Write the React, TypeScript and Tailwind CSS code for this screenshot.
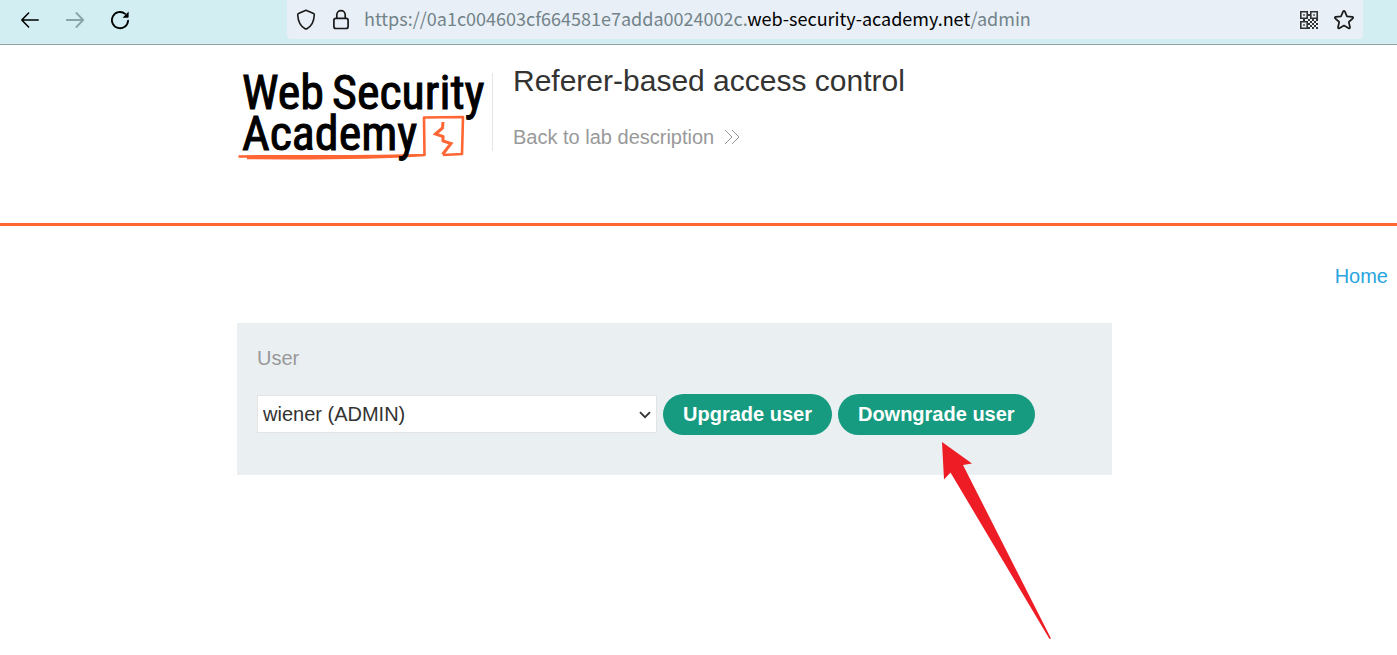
function BackIcon() {
  return (
    <svg width="20" height="20" viewBox="0 0 20 20" fill="none" stroke="currentColor" strokeWidth="1.6" strokeLinecap="round" strokeLinejoin="round" aria-hidden="true">
      <path d="M18.2 10H1.8M8.6 3 1.8 10l6.8 7" />
    </svg>
  );
}

function ForwardIcon() {
  return (
    <svg width="20" height="20" viewBox="0 0 20 20" fill="none" stroke="currentColor" strokeWidth="1.8" strokeLinecap="round" strokeLinejoin="round" aria-hidden="true">
      <path d="M1.8 10h16.4M11.4 3l6.8 7-6.8 7" />
    </svg>
  );
}

function ReloadIcon() {
  return (
    <svg width="20" height="20" viewBox="0 0 20 20" fill="none" stroke="currentColor" strokeWidth="1.8" strokeLinecap="round" aria-hidden="true">
      <path d="M18.1 10.6A8.1 8.1 0 1 1 15.2 3.9" />
      <path d="M18.6 1.6v5.3a.8.8 0 0 1-.8.8h-5.2z" fill="currentColor" stroke="none" />
    </svg>
  );
}

function ShieldIcon() {
  return (
    <svg width="20" height="22" viewBox="0 0 20 22" fill="none" stroke="currentColor" strokeWidth="1.6" strokeLinejoin="round" aria-hidden="true">
      <path d="M10 1.2 17.6 4.6c.5.2.7.6.7 1.1C18 12.1 15.6 17.2 10.9 19.7c-.6.3-1.2.3-1.8 0C4.4 17.2 2 12.1 1.7 5.7c0-.5.2-.9.7-1.1z" />
    </svg>
  );
}

function LockIcon() {
  return (
    <svg width="18" height="22" viewBox="0 0 18 22" fill="none" stroke="currentColor" strokeWidth="1.7" aria-hidden="true">
      <rect x="1.9" y="9.3" width="14.2" height="10.2" rx="2" />
      <path d="M4.8 9.3V5.8a4.2 4.2 0 0 1 8.4 0v3.5" />
    </svg>
  );
}

function QrIcon() {
  return (
    <svg width="18" height="18" viewBox="0 0 18 18" fill="#333" aria-hidden="true">
      <path fillRule="evenodd" d="M0 0h8v8H0zM1.600 1.600v4.800h4.800V1.600zM10 0h8v8h-8zM11.600 1.600v4.800h4.800V1.600zM0 10h8v8H0zM1.600 11.600v4.800h4.800v-4.800z" />
      <path d="M3.200 3.200h1.600v1.600H3.200zM13.200 3.200h1.600v1.600h-1.600zM3.200 13.200h1.600v1.600H3.200zM8 3h2v2H8zM3 8h2v2H3zM8 8h2v2H8zM12 8h2v2h-2zM16 8h2v2h-2zM10 10h2v2h-2zM14 10h2v2h-2zM8 12h2v2H8zM12 12h2v2h-2zM16 12h2v2h-2zM10 14h2v2h-2zM14 14h2v2h-2zM8 16h2v2H8zM12 16h2v2h-2zM16 16h2v2h-2z" />
    </svg>
  );
}

function StarIcon() {
  return (
    <svg width="20" height="20" viewBox="0 0 20 20" fill="none" stroke="currentColor" strokeWidth="1.7" strokeLinejoin="round" aria-hidden="true">
      <path d="M10 .9c.3 0 .6.2.8.5l2.2 4.9 5.3.6c.8.1 1.1 1 .5 1.500l-4 3.600 1.200 5.300c.1.800-.7 1.300-1.300 1L10 15.600l-4.700 2.700c-.6.300-1.400-.2-1.300-1l1.200-5.300-4-3.600c-.6-.5-.3-1.400.5-1.500l5.300-.6 2.200-4.900c.2-.3.500-.5.800-.5z" />
    </svg>
  );
}

function Toolbar() {
  return (
    <nav aria-label="Browser" className="flex h-[45px] items-start border-b border-[#8fa3a5] bg-[#d2eef2]">
      <div className="flex h-10 w-[287px] shrink-0 items-center gap-[25px] pl-5 text-black">
        <button type="button" aria-label="Back"><BackIcon /></button>
        <button type="button" aria-label="Forward" disabled className="text-[#8aa3a7]"><ForwardIcon /></button>
        <button type="button" aria-label="Reload"><ReloadIcon /></button>
      </div>
      <div className="mr-[34px] flex h-[39px] min-w-0 flex-1 items-center rounded-b bg-[#e9eff6] pr-[9px] pl-[9px] text-[#1a1a1a]">
        <button type="button" aria-label="Tracking protection"><ShieldIcon /></button>
        <button type="button" aria-label="Site information" className="ml-4"><LockIcon /></button>
        <p className="ml-[14px] min-w-0 flex-1 truncate pb-0.5 font-['Noto_Sans_CJK_SC',sans-serif] text-[18px] text-[#72838a]">
          https://0a1c004603cf664581e7adda0024002c.<span className="text-black">web-security-academy.net</span>/admin
        </p>
        <button type="button" aria-label="QR code"><QrIcon /></button>
        <button type="button" aria-label="Bookmark" className="ml-4"><StarIcon /></button>
      </div>
    </nav>
  );
}

function Logo() {
  return (
    <a href="#" aria-label="Web Security Academy" className="block">
      <svg width="252" height="100" viewBox="0 0 252 100" aria-hidden="true">
        <path d="M1.5 93.500c20-1 120 1 186-1.500L187 54.500l39-.5-1 37-19 1M10 95c60 .5 130 0 178-3" fill="none" stroke="#ff6633" strokeWidth="2.6" strokeLinejoin="round" />
        <path d="M206 59l-.5 6-7 6 7.500 2.500v4.500l8 2.500-8.500 11" fill="none" stroke="#ff6633" strokeWidth="3" />
        <g fill="#000" stroke="#000" className="font-['Roboto_Condensed',Roboto,sans-serif] text-[48px]">
          <text x="5" y="46">Web</text>
          <text x="95" y="46">Security</text>
          <text x="5" y="87">Academy</text>
        </g>
      </svg>
    </a>
  );
}

function LabHeader() {
  return (
    <header className="border-b-[3px] border-[#ff6633] pt-[18px] pb-[60px]">
      <div className="mx-auto flex w-full max-w-[923px] items-start">
        <Logo />
        <div className="mt-[10px] ml-[3px] h-[78px] w-px bg-[#e5e5e5]" />
        <div className="ml-5 min-w-0">
          <h2 className="text-[30px] leading-9 text-[#333332]">Referer-based access control</h2>
          <a href="#" className="mt-[26px] flex items-center gap-[10px] text-[20px] leading-6 text-[#999]">
            Back to lab description
            <svg width="16" height="16" viewBox="0 0 16 16" fill="none" stroke="currentColor" aria-hidden="true">
              <path d="M1 1l7 7-7 7M8 1l7 7-7 7" />
            </svg>
          </a>
        </div>
      </div>
    </header>
  );
}

function RoleForm() {
  return (
    <form onSubmit={(e) => e.preventDefault()} className="max-w-[875px] bg-[#eaeff2] px-5 pt-[23px] pb-10">
      <label htmlFor="username" className="block text-[20px] leading-6 text-[#999]">User</label>
      <div className="mt-6 flex flex-wrap items-start gap-1.5">
        <div className="relative mt-px w-[400px]">
          <select id="username" defaultValue="wiener" className="h-[38px] w-full appearance-none border border-[#e3e3e3] bg-white pl-[5px] text-[20px] text-[#333332]">
            <option value="wiener">wiener (ADMIN)</option>
            <option value="carlos">carlos (NORMAL)</option>
          </select>
          <svg className="pointer-events-none absolute top-[16px] right-[6px]" width="12" height="8" viewBox="0 0 12 8" fill="none" stroke="#333332" strokeWidth="1.8" aria-hidden="true">
            <path d="M1 1.200l5 5 5-5" />
          </svg>
        </div>
        <button type="submit" value="upgrade" className="h-[41px] rounded-full bg-[#179b80] px-5 pb-0.5 text-[20px] font-bold text-white">Upgrade user</button>
        <button type="submit" value="downgrade" className="relative h-[41px] rounded-full bg-[#179b80] px-5 pb-0.5 text-[20px] font-bold text-white">
          Downgrade user
          <svg className="pointer-events-none absolute top-[48px] left-[103px]" width="112" height="200" viewBox="0 0 112 200" fill="#ee1c24" aria-hidden="true">
            <path d="M1 0l30 21.500-9 1.500L110 196.500l-1.500.5L9.500 30.500 3 37.500z" />
          </svg>
        </button>
      </div>
    </form>
  );
}

export default function App() {
  return (
    <div className="min-h-screen bg-white font-['Liberation_Sans',Arial,sans-serif]">
      <Toolbar />
      <LabHeader />
      <main>
        <div className="flex justify-end pt-[38px] pr-[9px]">
          <a href="#" className="text-[20px] leading-6 text-[#29a5e0]">Home</a>
        </div>
        <div className="mx-auto mt-[35px] w-full max-w-[923px]">
          <RoleForm />
        </div>
      </main>
    </div>
  );
}
